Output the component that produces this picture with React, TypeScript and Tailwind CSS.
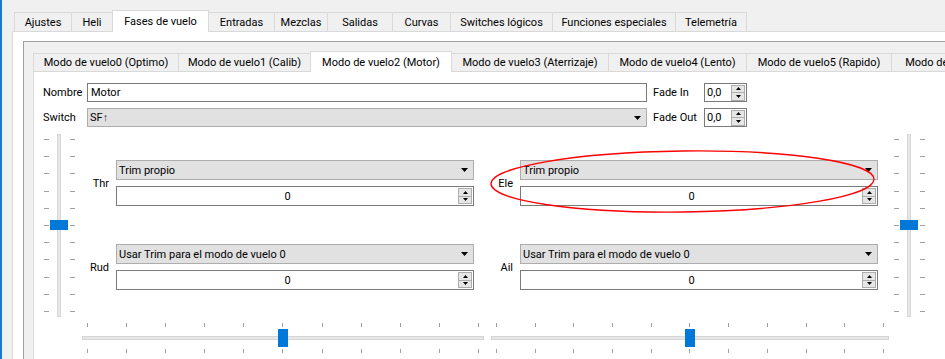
import React from "react";

type TabDef = { label: string; w: string };

const outerTabs: TabDef[] = [
  { label: "Ajustes", w: "w-[57px]" },
  { label: "Heli", w: "w-[41px]" },
  { label: "Fases de vuelo", w: "w-[97px]" },
  { label: "Entradas", w: "w-[65px]" },
  { label: "Mezclas", w: "w-[53px]" },
  { label: "Salidas", w: "w-[65px]" },
  { label: "Curvas", w: "w-[58px]" },
  { label: "Switches lógicos", w: "w-[102px]" },
  { label: "Funciones especiales", w: "w-[123px]" },
  { label: "Telemetría", w: "w-[72px]" },
];

const innerTabs: TabDef[] = [
  { label: "Modo de vuelo0 (Optimo)", w: "w-[145px]" },
  { label: "Modo de vuelo1 (Calib)", w: "w-[132px]" },
  { label: "Modo de vuelo2 (Motor)", w: "w-[142px]" },
  { label: "Modo de vuelo3 (Aterrizaje)", w: "w-[156px]" },
  { label: "Modo de vuelo4 (Lento)", w: "w-[138px]" },
  { label: "Modo de vuelo5 (Rapido)", w: "w-[145px]" },
  { label: "Modo de vuelo6 (Rapido)", w: "w-[150px]" },
];

function TabBar({ tabs, selected, outer }: { tabs: TabDef[]; selected: number; outer: boolean }) {
  return (
    <>
      {tabs.map((t, i) => {
        if (i === selected) {
          return (
            <div
              key={t.label}
              className={`${t.w} ${outer ? "h-[22px]" : "h-[21px]"} -mb-px relative z-10 shrink-0 whitespace-nowrap bg-white border-x border-t border-[#d9d9d9] flex items-center justify-center`}
            >
              {t.label}
            </div>
          );
        }
        const noLeft = i === selected + 1;
        const last = outer && i === tabs.length - 1;
        return (
          <div
            key={t.label}
            className={`${t.w} ${outer ? "h-[19px]" : "h-[18px]"} shrink-0 whitespace-nowrap bg-[#f0f0f0] border-t ${noLeft ? "" : "border-l"} ${last ? "border-r" : ""} border-[#d9d9d9] flex items-center justify-center`}
          >
            {t.label}
          </div>
        );
      })}
    </>
  );
}

function DownArrow() {
  return (
    <svg width="7" height="4" viewBox="0 0 7 4">
      <path d="M0 0H7L3.5 4Z" fill="#000" />
    </svg>
  );
}

function SpinButtons() {
  return (
    <div className="w-[14px] h-[16px] mr-px flex flex-col border border-[#adadad] bg-[#e6e6e6] shrink-0">
      <div className="flex-1 flex items-center justify-center">
        <svg width="5" height="3" viewBox="0 0 5 3">
          <path d="M2.5 0L5 3H0Z" fill="#000" />
        </svg>
      </div>
      <div className="flex-1 flex items-center justify-center border-t border-[#adadad]">
        <svg width="5" height="3" viewBox="0 0 5 3">
          <path d="M0 0H5L2.5 3Z" fill="#000" />
        </svg>
      </div>
    </div>
  );
}

function Combo({ text }: { text: React.ReactNode }) {
  return (
    <div className="h-[20px] bg-[#e1e1e1] border border-[#adadad] flex items-center justify-between pl-[2px] pr-[5px]">
      <span>{text}</span>
      <DownArrow />
    </div>
  );
}

function Spin() {
  return (
    <div className="h-[20px] bg-white border border-[#7a7a7a] flex items-center">
      <div className="flex-1 text-center">0</div>
      <SpinButtons />
    </div>
  );
}

function FadeSpin() {
  return (
    <div className="w-[43px] h-[19px] bg-white border border-[#7a7a7a] flex items-center">
      <div className="flex-1 pl-[2px]">0,0</div>
      <SpinButtons />
    </div>
  );
}

const ticks11 = [0, 1, 2, 3, 4, 5, 6, 7, 8, 9, 10];

function VSlider() {
  return (
    <div className="relative flex w-[31px] h-[183px]">
      <div className="w-[5px] flex flex-col justify-between py-[5px]">
        {ticks11.map((i) => (
          <div key={i} className="h-px w-[5px] bg-[#a0a0a0]" />
        ))}
      </div>
      <div className="ml-[8px] w-[4px] h-full bg-[#e7e7e7] border border-[#d6d6d6]" />
      <div className="ml-[9px] w-[5px] flex flex-col justify-between py-[5px]">
        {ticks11.map((i) => (
          <div key={i} className="h-px w-[5px] bg-[#a0a0a0]" />
        ))}
      </div>
      <div className="absolute left-[6px] top-[86px] w-[18px] h-[10px] bg-[#0078d7]" />
    </div>
  );
}

function HSlider({ w, handle }: { w: string; handle: string }) {
  return (
    <div className={`relative ${w} h-[30px] flex flex-col`}>
      <div className="h-[4px] flex justify-between px-[5px]">
        {ticks11.map((i) => (
          <div key={i} className="w-px h-full bg-[#a0a0a0]" />
        ))}
      </div>
      <div className="mt-[9px] h-[4px] bg-[#e7e7e7] border border-[#d6d6d6]" />
      <div className="mt-[9px] h-[4px] flex justify-between px-[5px]">
        {ticks11.map((i) => (
          <div key={i} className="w-px h-full bg-[#a0a0a0]" />
        ))}
      </div>
      <div className={`absolute top-[6px] ${handle} w-[10px] h-[18px] bg-[#0078d7]`} />
    </div>
  );
}

function TrimBlock({ label, combo, lw }: { label: string; combo: string; lw: string }) {
  return (
    <div className="flex items-center">
      <div className={`${lw} text-right pr-[7px]`}>{label}</div>
      <div className="w-[358px] flex flex-col gap-[6px]">
        <Combo text={combo} />
        <Spin />
      </div>
    </div>
  );
}

export default function App() {
  return (
    <div className="relative w-[945px] h-[359px] overflow-hidden bg-[#f0f0f0] border-l-2 border-[#1b79d4] font-['Roboto',sans-serif] text-[11px] text-black leading-none">
      <div className="flex flex-col h-full pl-[10px] pt-[10px]">
        <div className="flex items-end h-[21px] pl-[2px] shrink-0">
          <TabBar tabs={outerTabs} selected={2} outer />
        </div>
        <div className="flex-1 -mr-[40px] bg-white border-l border-t border-[#d9d9d9] pl-[10px] pt-[9px]">
          <div className="h-full flex flex-col border-l border-t border-[#a0a0a0] bg-[#f0f0f0] pl-[9px] pt-[9px]">
            <div className="flex items-end h-[20px] shrink-0 overflow-visible">
              <TabBar tabs={innerTabs} selected={2} outer={false} />
            </div>
            <div className="flex-1 bg-white border-l border-t border-[#d9d9d9] pl-[9px] pt-[11px]">
              <div className="flex flex-col">
                <div className="flex items-center h-[19px]">
                  <div className="w-[44px]">Nombre</div>
                  <div className="w-[560px] h-full border border-[#7a7a7a] bg-white flex items-center pl-[3px]">
                    Motor
                  </div>
                  <div className="ml-[6px] w-[51px]">Fade In</div>
                  <FadeSpin />
                </div>
                <div className="flex items-center h-[19px] mt-[6px]">
                  <div className="w-[44px]">Switch</div>
                  <div className="w-[560px] h-full bg-[#e1e1e1] border border-[#adadad] flex items-center justify-between pl-[2px] pr-[5px]">
                    <span>
                      SF<span className="text-[#2b3a4a]">↑</span>
                    </span>
                    <DownArrow />
                  </div>
                  <div className="ml-[6px] w-[51px]">Fade Out</div>
                  <FadeSpin />
                </div>
                <div className="flex mt-[7px]">
                  <div className="ml-[1px]">
                    <VSlider />
                  </div>
                  <div className="flex flex-col pt-[26px] gap-[38px]">
                    <TrimBlock label="Thr" combo="Trim propio" lw="w-[41px]" />
                    <TrimBlock label="Rud" combo="Usar Trim para el modo de vuelo 0" lw="w-[41px]" />
                  </div>
                  <div className="flex flex-col pt-[26px] gap-[38px]">
                    <TrimBlock label="Ele" combo="Trim propio" lw="w-[46px]" />
                    <TrimBlock label="Ail" combo="Usar Trim para el modo de vuelo 0" lw="w-[46px]" />
                  </div>
                  <div className="ml-[16px]">
                    <VSlider />
                  </div>
                </div>
                <div className="flex mt-[6px]">
                  <div className="ml-[39px]">
                    <HSlider w="w-[402px]" handle="left-[196px]" />
                  </div>
                  <div className="ml-[7px]">
                    <HSlider w="w-[398px]" handle="left-[194px]" />
                  </div>
                </div>
              </div>
            </div>
          </div>
        </div>
      </div>
      <svg className="absolute left-0 top-0 pointer-events-none" width="943" height="359">
        <ellipse
          cx="680.5"
          cy="181.5"
          rx="191.5"
          ry="30.5"
          transform="rotate(-0.7 680.5 181.5)"
          fill="none"
          stroke="#ff0000"
          strokeWidth="1.4"
        />
      </svg>
    </div>
  );
}
